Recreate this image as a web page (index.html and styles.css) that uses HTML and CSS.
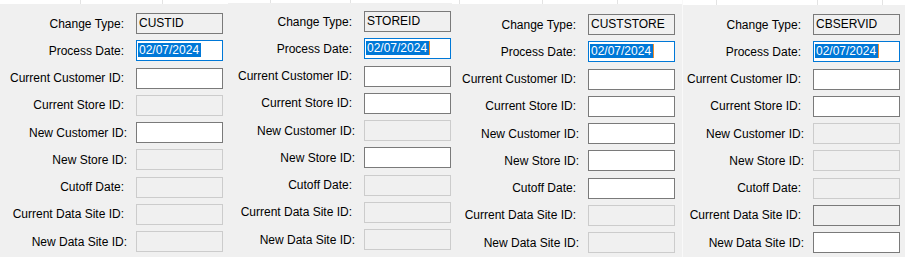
FILE: index.html
```html
<!DOCTYPE html>
<html>
    <head>
<title>Change Requests</title>
        <link rel="stylesheet" href="styles.css">
    </head>
    <body>
        <div class="screen">

            <div class="panel p1">
                <div class="strip"><span></span><span></span><span></span></div>
                <div class="form">
                    <div class="lbl">Change Type:</div><div class="box ro">CUSTID</div>
                    <div class="lbl">Process Date:</div><div class="box focus"><span class="sel">02/07/2024</span></div>
                    <div class="lbl">Current Customer ID:</div><div class="box"></div>
                    <div class="lbl">Current Store ID:</div><div class="box off"></div>
                    <div class="lbl nudge">New Customer ID:</div><div class="box"></div>
                    <div class="lbl nudge">New Store ID:</div><div class="box off"></div>
                    <div class="lbl">Cutoff Date:</div><div class="box off"></div>
                    <div class="lbl">Current Data Site ID:</div><div class="box off"></div>
                    <div class="lbl nudge">New Data Site ID:</div><div class="box off"></div>
                </div>
            </div>

            <div class="panel p2">
                <div class="strip"><span></span><span></span><span></span></div>
                <div class="form">
                    <div class="lbl">Change Type:</div><div class="box ro">STOREID</div>
                    <div class="lbl">Process Date:</div><div class="box focus"><span class="sel caret">02/07/2024</span></div>
                    <div class="lbl">Current Customer ID:</div><div class="box"></div>
                    <div class="lbl">Current Store ID:</div><div class="box"></div>
                    <div class="lbl nudge">New Customer ID:</div><div class="box off"></div>
                    <div class="lbl nudge">New Store ID:</div><div class="box"></div>
                    <div class="lbl">Cutoff Date:</div><div class="box off"></div>
                    <div class="lbl">Current Data Site ID:</div><div class="box off"></div>
                    <div class="lbl nudge">New Data Site ID:</div><div class="box off"></div>
                </div>
            </div>

            <div class="panel p3">
                <div class="strip"><span></span><span></span><span></span><span></span></div>
                <div class="form">
                    <div class="lbl">Change Type:</div><div class="box ro">CUSTSTORE</div>
                    <div class="lbl">Process Date:</div><div class="box focus"><span class="sel caret">02/07/2024</span></div>
                    <div class="lbl">Current Customer ID:</div><div class="box"></div>
                    <div class="lbl">Current Store ID:</div><div class="box"></div>
                    <div class="lbl nudge">New Customer ID:</div><div class="box"></div>
                    <div class="lbl nudge">New Store ID:</div><div class="box"></div>
                    <div class="lbl">Cutoff Date:</div><div class="box"></div>
                    <div class="lbl">Current Data Site ID:</div><div class="box off"></div>
                    <div class="lbl nudge">New Data Site ID:</div><div class="box off"></div>
                </div>
            </div>

            <div class="panel p4">
                <div class="strip"><span></span><span></span><span></span><span></span></div>
                <div class="form">
                    <div class="lbl">Change Type:</div><div class="box ro">CBSERVID</div>
                    <div class="lbl">Process Date:</div><div class="box focus"><span class="sel caret">02/07/2024</span></div>
                    <div class="lbl">Current Customer ID:</div><div class="box"></div>
                    <div class="lbl">Current Store ID:</div><div class="box"></div>
                    <div class="lbl nudge">New Customer ID:</div><div class="box off"></div>
                    <div class="lbl nudge">New Store ID:</div><div class="box off"></div>
                    <div class="lbl">Cutoff Date:</div><div class="box off"></div>
                    <div class="lbl">Current Data Site ID:</div><div class="box ro"></div>
                    <div class="lbl nudge">New Data Site ID:</div><div class="box"></div>
                </div>
            </div>

        </div>
    </body>
</html>
```

FILE: styles.css
```css
body{
    margin:0;
    background:#f0f0f0;
    font-family:"Liberation Sans", Arial, sans-serif;
    font-size:12px;
    color:#000;
}
.screen{
    display:flex;
    width:905px;
    height:257px;
    overflow:hidden;
}
.panel{
    display:flex;
    flex-direction:column;
    box-sizing:border-box;
}
.p1{ width:228px; }
.p2{ width:224px; }
.p3{ width:230px; }
.p4{ width:223px; border-left:1px solid #f9f9f9; }

/* white strip left over from the grid above each capture */
.strip{
    display:flex;
    background:#fff;
    height:4px;
}
.strip span{
    box-sizing:border-box;
    border-right:1px solid #e3e3e3;
    height:100%;
}
.strip span:last-child{
    flex:1;
    border-right:none;
}
.p1 .strip span:nth-child(1){ width:81px; }
.p1 .strip span:nth-child(2){ width:82px; }
.p2 .strip{ height:3px; }
.p2 .strip span:nth-child(1){ width:43px; }
.p2 .strip span:nth-child(2){ width:80px; }
.p3 .strip span:nth-child(1){ width:8px; }
.p3 .strip span:nth-child(2){ width:83px; }
.p3 .strip span:nth-child(3){ width:75px; }
.p4 .strip{ height:5px; }
.p4 .strip span:nth-child(1){ width:34px; }
.p4 .strip span:nth-child(2){ width:101px; }
.p4 .strip span:nth-child(3){ width:65px; }

.form{
    display:grid;
    grid-template-columns:124px 87px;
    grid-auto-rows:21px;
    column-gap:12px;
    row-gap:6.25px;
    padding-top:9px;
}
.p2 .form{ padding-top:8px; }
.p3 .form{ padding-top:10px; }
.p4 .form{ padding-top:9px; grid-template-columns:118px 87px; column-gap:12px; }

.lbl{
    text-align:right;
    white-space:nowrap;
    align-self:center;
    line-height:14px;
}
.nudge{
    margin-right:-3px;
}
.box{
    box-sizing:border-box;
    height:21px;
    background:#fff;
    border:1px solid #7a7a7a;
    padding-left:2px;
    line-height:19px;
    white-space:nowrap;
    overflow:hidden;
}
.box.off{
    background:#f0f0f0;
    border-color:#cccccc;
}
.box.ro{
    background:#f0f0f0;
    border-color:#7a7a7a;
}
.box.focus{
    border-color:#0078d7;
    padding-left:1px;
}
.sel{
    display:inline-block;
    vertical-align:middle;
    background:#0078d7;
    color:#fff;
    line-height:14px;
    padding:0 2px 0 1px;
    margin-top:-2px;
}
.caret{
    border-right:1px solid #f28c28;
}
```
